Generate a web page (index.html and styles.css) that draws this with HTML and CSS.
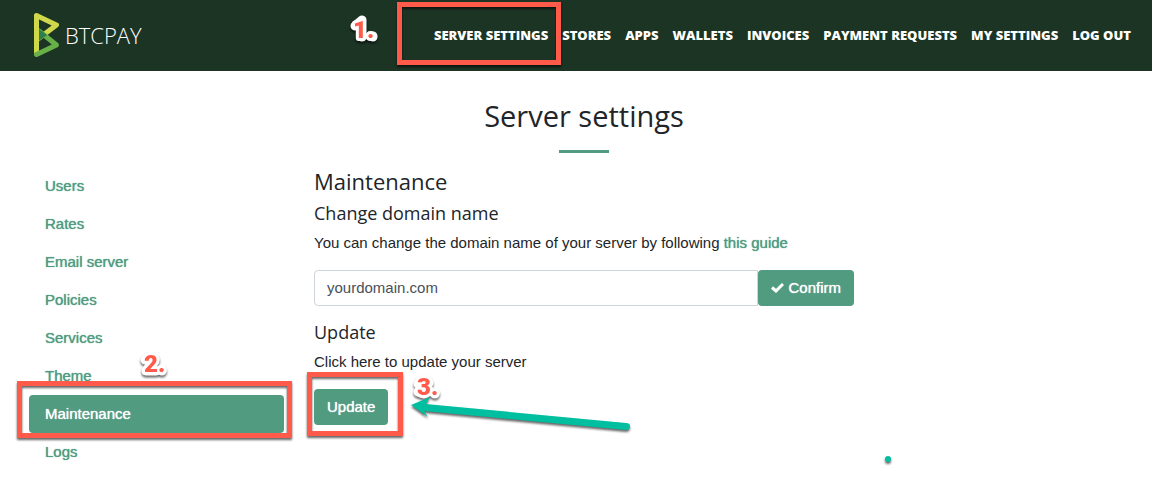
FILE: index.html
```html
<!DOCTYPE html>
<html lang="en">
<head>
<meta charset="utf-8">
<meta name="viewport" content="width=device-width, initial-scale=1">
<title>Server settings - BTCPay</title>
<link rel="stylesheet" href="styles.css">
</head>
<body>
<header class="topbar">
  <a class="brand" href="#" aria-label="BTCPAY home">
    <svg class="brand-mark" width="28" height="48" viewBox="0 0 28 48" fill="none" stroke-width="5" stroke-linecap="round" stroke-linejoin="round" aria-hidden="true">
      <path d="M3.500 42.500V4.500L23.500 14L5 28" stroke="#cfd84a"/>
      <path d="M6 20L23.500 34L3.500 43.500" stroke="#68b148"/>
      <path d="M6 18L14 24L6 30Z" fill="#2f7d4b"/>
      <path d="M3.500 5V36" stroke="#cfd84a"/>
    </svg>
    <span class="brand-name">BTCPAY</span>
  </a>
  <nav class="main-nav" aria-label="Main">
    <a href="#">Server settings</a>
    <a href="#">Stores</a>
    <a href="#">Apps</a>
    <a href="#">Wallets</a>
    <a href="#">Invoices</a>
    <a href="#">Payment requests</a>
    <a href="#">My settings</a>
    <a href="#">Log out</a>
  </nav>
</header>

<main class="page">
  <h1 class="page-title">Server settings</h1>
  <hr class="title-rule">
  <div class="columns">
    <nav class="side-nav" aria-label="Server settings">
      <a href="#">Users</a>
      <a href="#">Rates</a>
      <a href="#">Email server</a>
      <a href="#">Policies</a>
      <a href="#">Services</a>
      <a href="#">Theme</a>
      <a href="#" class="active" aria-current="page">Maintenance</a>
      <a href="#">Logs</a>
    </nav>
    <section class="content">
      <h2>Maintenance</h2>
      <h3><label for="domain">Change domain name</label></h3>
      <p>You can change the domain name of your server by following <a href="#">this guide</a></p>
      <form class="domain-form">
        <input id="domain" type="text" value="yourdomain.com">
        <button type="button" class="button">
          <svg width="13" height="10" viewBox="0 0 13 10" fill="none" stroke="#fff" stroke-width="3" aria-hidden="true"><path d="M1 4.500L5 8L12 1"/></svg>
          Confirm
        </button>
      </form>
      <h3>Update</h3>
      <p>Click here to update your server</p>
      <button type="button" class="button">Update</button>
    </section>
  </div>
</main>

<svg class="annotations" width="1152" height="477" viewBox="0 0 1152 477" role="img" aria-label="Steps 1 to 3">
  <g class="boxes">
    <rect x="399.500" y="4.500" width="159" height="58"/>
    <rect x="19.500" y="383.500" width="270" height="52"/>
    <rect x="309.500" y="374.500" width="91" height="59"/>
  </g>
  <g class="steps">
    <g class="outline" aria-hidden="true">
      <path d="M355 26L362 20V37M373 36V37M145 360L150 356L155 359L146 371H156M162 371V370M418 384L424 379L429 383L424 387L429 391L424 394L418 392M435 393V394"/>
    </g>
    <text x="353" y="38">1.</text>
    <text x="144" y="372">2.</text>
    <text x="417" y="395">3.</text>
  </g>
  <g class="arrow">
    <path d="M411 405L430 397L426 404L626 423Q630 423 630 426Q630 430 626 430L424 411L428 417Z"/>
    <circle cx="888" cy="459" r="3"/>
  </g>
</svg>
</body>
</html>
```

FILE: styles.css
```css
* {
  box-sizing: border-box;
}

body {
  margin: 0;
  background: #fff;
  color: #212529;
  font: 15px/22px "Liberation Sans", Arial, sans-serif;
}

a {
  color: #519b80;
  text-decoration: none;
}

.topbar {
  display: flex;
  align-items: center;
  justify-content: space-between;
  height: 71px;
  padding: 0 21px 2px 33px;
  background: #1c3424;
}

.brand {
  display: flex;
  align-items: center;
  gap: 4px;
  color: #fff;
}

.brand-name {
  font: 300 22px/30px "Open Sans", sans-serif;
}

.main-nav {
  display: flex;
  gap: 14px;
}

.main-nav a {
  color: #fff;
  font: 800 13px/20px "Open Sans", sans-serif;
  text-transform: uppercase;
  white-space: nowrap;
}

.page {
  padding: 26px 0 16px 29px;
}

h1,
h2,
h3 {
  margin: 0;
  font-family: "Open Sans", sans-serif;
  font-weight: 400;
}

.page-title {
  padding-right: 13px;
  font-size: 29px;
  line-height: 38px;
  text-align: center;
}

.title-rule {
  width: 50px;
  height: 3px;
  margin: 15px auto 14px;
  border: 0;
  background: #519b80;
  translate: -7px;
}

.columns {
  display: flex;
  gap: 30px;
}

.side-nav {
  display: flex;
  flex: 0 0 255px;
  flex-direction: column;
}

.side-nav a {
  padding: 8px 16px;
  border-radius: 4px;
}

.side-nav .active {
  background: #519b80;
  color: #fff;
}

.side-nav a,
.content a,
.button {
  text-shadow: 0 0 1px currentColor;
}

.content {
  flex: 1;
  max-width: 540px;
}

h2 {
  font-size: 22px;
  line-height: 28px;
}

h3 {
  margin: 6px 0 7px;
  font-size: 18px;
  line-height: 24px;
}

p {
  margin: 0 0 16px;
}

.domain-form {
  display: flex;
  margin-bottom: 14px;
}

.domain-form input {
  flex: 1;
  min-width: 0;
  padding: 5px 12px;
  border: 1px solid #ced4da;
  border-radius: 4px 0 0 4px;
  background: #fff;
  color: #495057;
  font: inherit;
}

.button {
  padding: 7px 13px;
  border: 0;
  border-radius: 4px;
  background: #519b80;
  color: #fff;
  font: inherit;
}

.annotations {
  position: absolute;
  top: 0;
  left: 0;
  pointer-events: none;
}

.boxes rect {
  fill: none;
  stroke: #ff5a4a;
  stroke-width: 5px;
}

.boxes,
.arrow,
.steps {
  filter: drop-shadow(0 2px 1px rgba(0, 0, 0, 0.6));
}

.arrow {
  fill: #00bfa0;
}

.outline path {
  fill: none;
  stroke: #fff;
  stroke-width: 9px;
  stroke-linecap: round;
  stroke-linejoin: round;
}

.steps text {
  fill: #ff5a4a;
  stroke: #fff;
  stroke-width: 6px;
  stroke-linejoin: round;
  paint-order: stroke;
  font: 900 24px Roboto, "Liberation Sans", Arial, sans-serif;
}
```
